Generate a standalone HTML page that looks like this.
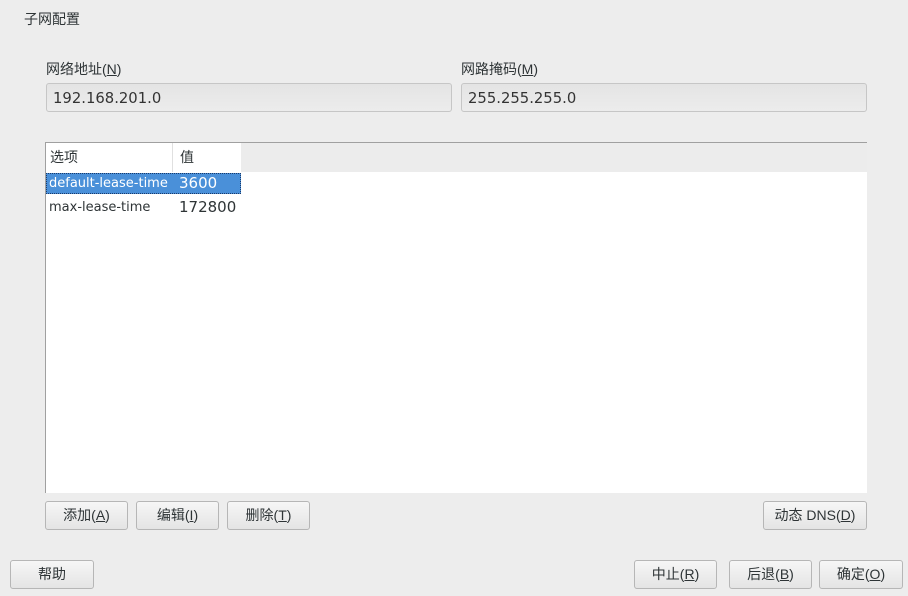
<!DOCTYPE html>
<html><head><meta charset="utf-8"><style>
body{margin:0;width:908px;height:596px;background:#ededed;font-family:"Liberation Sans","Noto Sans CJK SC",sans-serif;font-size:14px;color:#2e3436;position:relative;overflow:hidden}
.a{position:absolute}
.d{font-family:"DejaVu Sans","Noto Sans CJK SC",sans-serif}
.inp{position:absolute;height:29px;border:1px solid #c6c6c6;border-radius:3px;background:linear-gradient(#e4e4e4,#ececec);box-sizing:border-box;padding-left:6px;line-height:29px;font-size:14.8px;color:#333;font-family:"DejaVu Sans",sans-serif}
.btn{position:absolute;height:29px;border:1px solid #b6b6b6;border-radius:3px;background:linear-gradient(#f6f6f6,#e4e4e4);box-sizing:border-box;text-align:center;line-height:27px;font-size:14px;color:#2e3436}
u{text-decoration:underline}
</style></head><body>
<div class="a" style="left:24px;top:9px">子网配置</div>
<div class="a" style="left:46px;top:59px">网络地址(<u>N</u>)</div>
<div class="a" style="left:461px;top:59px">网路掩码(<u>M</u>)</div>
<div class="inp" style="left:46px;top:83px;width:406px">192.168.201.0</div>
<div class="inp" style="left:461px;top:83px;width:406px">255.255.255.0</div>
<div class="a" style="left:45px;top:142px;width:822px;height:351px;background:#fff;border-top:1px solid #a0a0a0;border-left:1px solid #a0a0a0;box-sizing:border-box">
 <div class="a" style="left:195px;top:0;right:0;height:29px;background:#ececec"></div>
 <div class="a" style="left:0;top:0;width:127px;height:29px;border-right:1px solid #e0e0e0;padding-left:4px;line-height:28px;box-sizing:border-box">选项</div>
 <div class="a" style="left:128px;top:0;width:67px;height:29px;padding-left:6px;line-height:28px;box-sizing:border-box">值</div>
 <div class="a" style="left:0;top:30px;width:195px;height:21px;background:#4a90d9;outline:1px dotted #1a3a6a;outline-offset:-1px"></div>
 <div class="a d" style="left:3px;top:33px;color:#fff;font-size:13px">default-lease-time</div>
 <div class="a d" style="left:133px;top:31px;color:#fff;font-size:15px">3600</div>
 <div class="a d" style="left:3px;top:57px;font-size:13px">max-lease-time</div>
 <div class="a d" style="left:133px;top:55px;font-size:15px">172800</div>
</div>
<div class="btn" style="left:45px;top:501px;width:83px">添加(<u>A</u>)</div>
<div class="btn" style="left:136px;top:501px;width:83px">编辑(<u>I</u>)</div>
<div class="btn" style="left:227px;top:501px;width:83px">删除(<u>T</u>)</div>
<div class="btn" style="left:763px;top:501px;width:104px">动态 DNS(<u>D</u>)</div>
<div class="btn" style="left:10px;top:560px;width:84px">帮助</div>
<div class="btn" style="left:634px;top:560px;width:83px">中止(<u>R</u>)</div>
<div class="btn" style="left:729px;top:560px;width:83px">后退(<u>B</u>)</div>
<div class="btn" style="left:819px;top:560px;width:84px">确定(<u>O</u>)</div>
</body></html>
